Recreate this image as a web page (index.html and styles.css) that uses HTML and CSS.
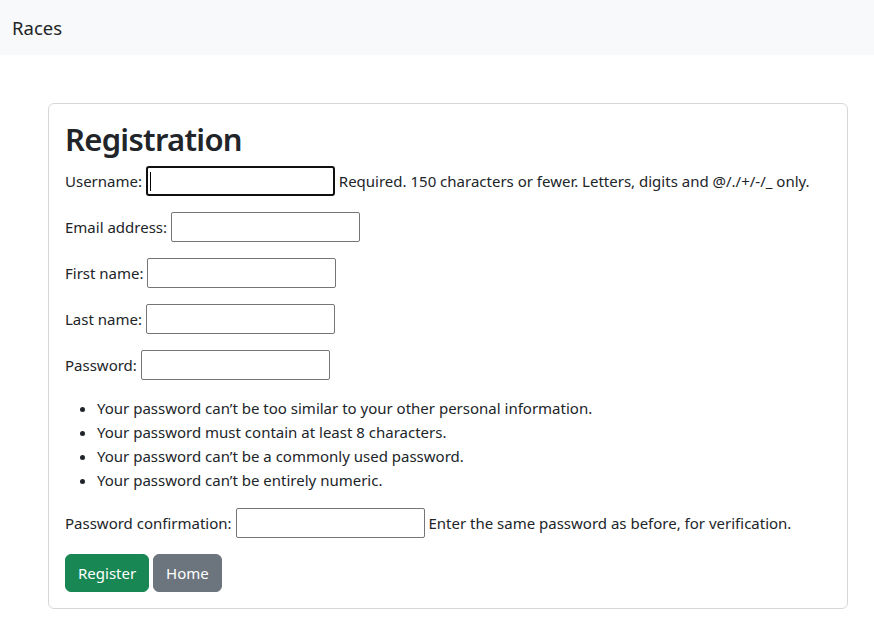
FILE: index.html
```html
<!DOCTYPE html>
<html lang="en">
<head>
<meta charset="utf-8">
<title>Registration</title>
<link rel="stylesheet" href="styles.css">
</head>
<body>
<nav class="navbar">
  <a class="brand" href="#">Races</a>
</nav>
<main class="page">
  <div class="card">
    <div class="card-body">
      <h1 class="title">Registration</h1>
      <form class="form">
        <p class="row"><label for="u">Username:</label> <span class="field"><input id="u" class="input input-focus" type="text"><span class="caret"></span></span> <span class="helptext">Required. 150 characters or fewer. Letters, digits and @/./+/-/_ only.</span></p>
        <p class="row"><label for="e">Email address:</label> <input id="e" class="input" type="text"></p>
        <p class="row"><label for="f">First name:</label> <input id="f" class="input" type="text"></p>
        <p class="row"><label for="l">Last name:</label> <input id="l" class="input" type="text"></p>
        <p class="row"><label for="p1">Password:</label> <input id="p1" class="input" type="password"></p>
        <ul class="rules">
          <li>Your password can’t be too similar to your other personal information.</li>
          <li>Your password must contain at least 8 characters.</li>
          <li>Your password can’t be a commonly used password.</li>
          <li>Your password can’t be entirely numeric.</li>
        </ul>
        <p class="row"><label for="p2">Password confirmation:</label> <input id="p2" class="input" type="password"> <span class="helptext">Enter the same password as before, for verification.</span></p>
        <div class="actions"><button type="button" class="btn btn-success">Register</button> <a href="#" class="btn btn-secondary">Home</a></div>
      </form>
    </div>
  </div>
</main>
</body>
</html>
```
FILE: styles.css
```css
*, *::before, *::after { box-sizing: border-box; }
html, body { margin: 0; padding: 0; }
body {
  font-family: "Noto Sans", "Open Sans", sans-serif;
  font-size: 15px;
  line-height: 24px;
  color: #212529;
  background: #fff;
}
.navbar {
  height: 55px;
  background: #f8f9fa;
  display: flex;
  align-items: center;
  padding: 0 12px;
}
.brand {
  font-size: 18.5px;
  line-height: 30px;
  color: #212529;
  text-decoration: none;
}
.page {
  padding: 48px 26px 20px 48px;
}
.card {
  width: 800px;
  border: 1px solid #d6d8db;
  border-radius: 6px;
  background: #fff;
}
.card-body {
  padding: 16px;
}
.title {
  font-size: 31px;
  line-height: 38px;
  font-weight: 600;
  letter-spacing: -0.7px;
  margin: 0 0 8px;
}
.form { margin: 0; }
.row { margin: 0 0 16px; }
.input {
  font: inherit;
  width: 189px;
  height: 30px;
  padding: 1px 2px;
  border: 1px solid #767676;
  border-radius: 2px;
  background: #fff;
  vertical-align: baseline;
  margin: 0;
}
.field { position: relative; display: inline-block; }
.input-focus {
  border: 2px solid #101010;
  border-radius: 3px;
  outline: none;
}
.caret {
  position: absolute;
  left: 4px;
  top: 6px;
  width: 1px;
  height: 19px;
  background: #000;
}
.rules {
  margin: 0 0 16px;
  padding-left: 32px;
}
.actions { line-height: 24px; }
.btn {
  display: inline-block;
  font: inherit;
  line-height: 24px;
  padding: 6px 12px;
  border: 1px solid transparent;
  border-radius: 6px;
  color: #fff;
  text-decoration: none;
  cursor: pointer;
  vertical-align: middle;
}
.btn-success { background: #198754; border-color: #198754; }
.btn-secondary { background: #6c757d; border-color: #6c757d; }
```
